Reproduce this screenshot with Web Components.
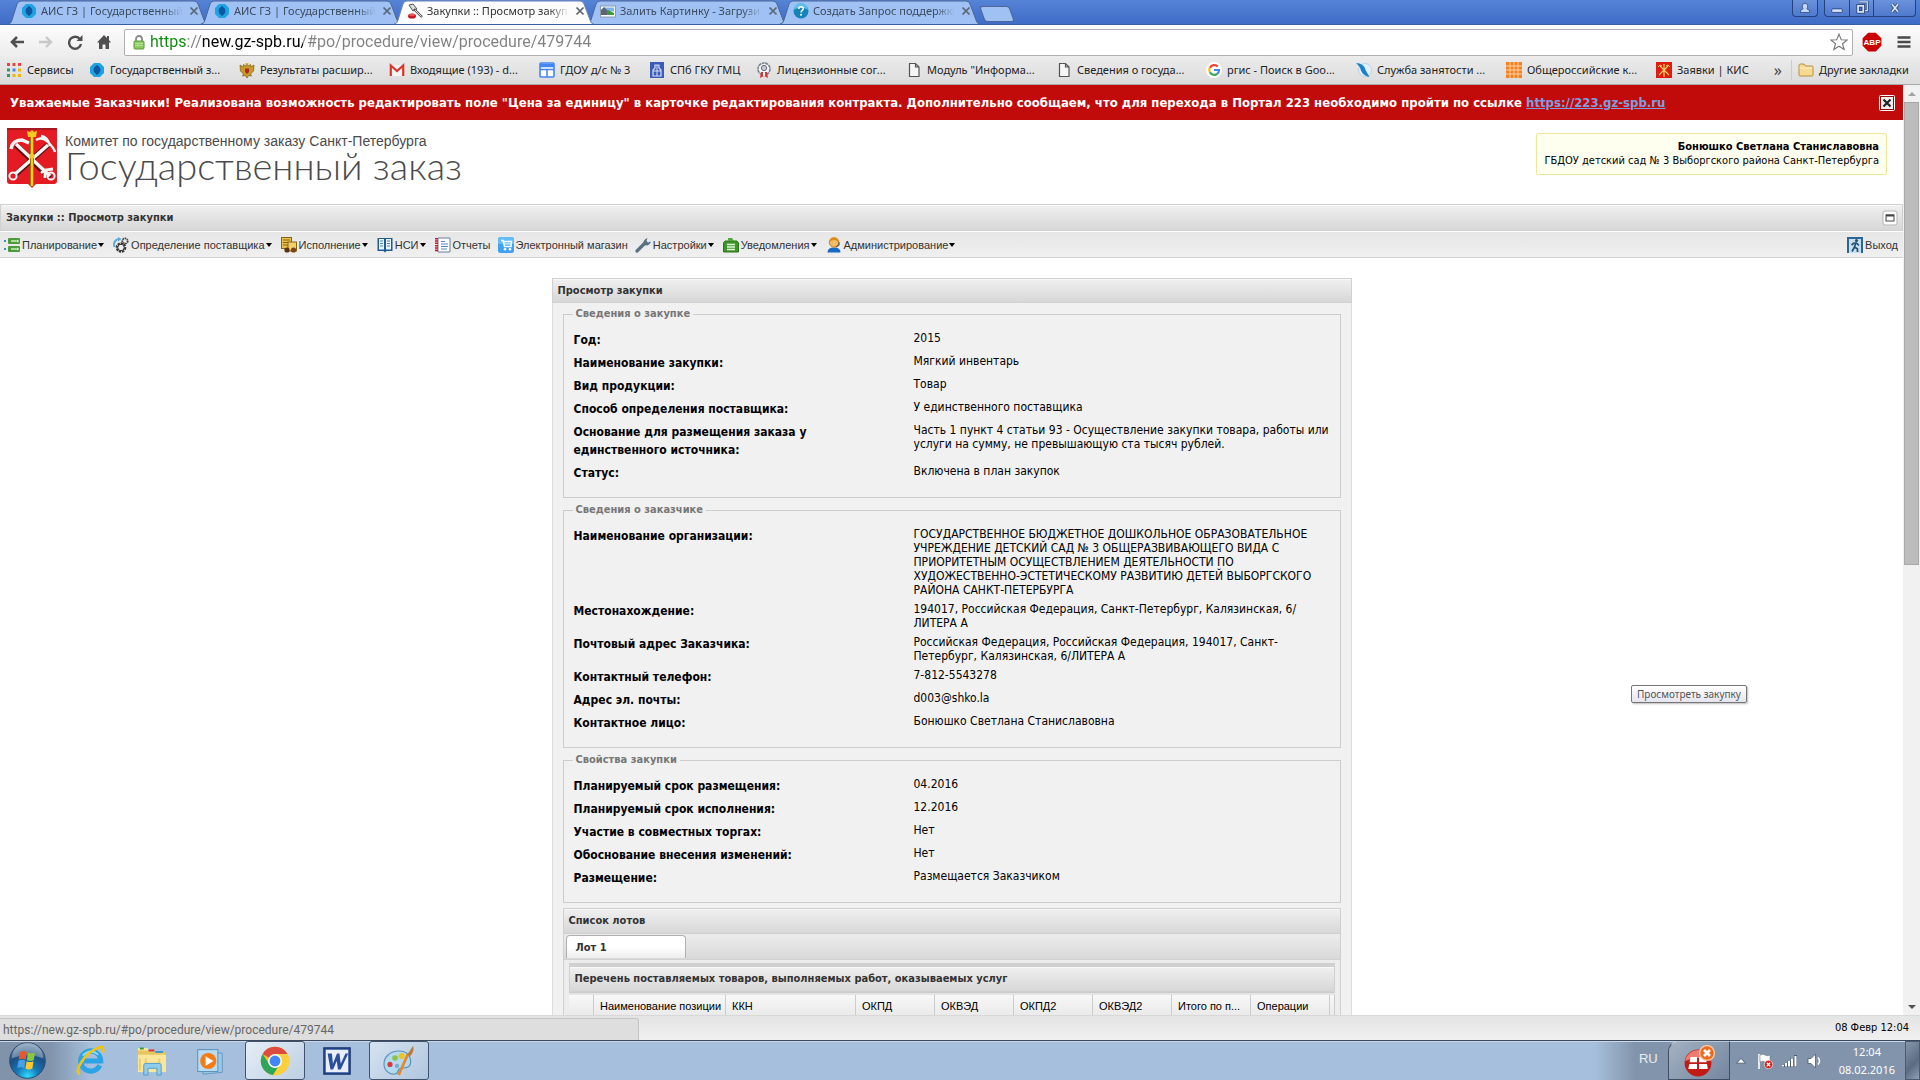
<!DOCTYPE html>
<html lang="ru">
<head>
<meta charset="utf-8">
<title>Закупки :: Просмотр закупки</title>
<style>
html,body{margin:0;height:100%}
body{font-family:"DejaVu Sans Condensed","DejaVu Sans",sans-serif;font-size:12px;color:#000;background:#fff;overflow:hidden}
</style>
</head>
<body>
<desktop-shell></desktop-shell>
<script>
const ICONS = {
drop:`<path d="M5 1h6l4 4v6l-4 4H5l-4-4V5z" fill="#1fa3e0"/><path d="M8 3c2 2 3 3 3 5s-1 3-3 5C6 11 5 10 5 8s1-3 3-5z" fill="#0b4f94"/><circle cx="8" cy="8" r="3.4" fill="#0b57a4"/>`,
gavel:`<path d="M2 2l4-1 4 5-4 2z" fill="#ddd" stroke="#555"/><path d="M7 6l8 8" stroke="#555" stroke-width="2.4"/><path d="M8 7l6.500 6.500" stroke="#ddd" stroke-width="1"/><ellipse cx="5" cy="13" rx="4" ry="2.600" fill="#c8101c"/><ellipse cx="5" cy="12" rx="3" ry="1.300" fill="#f05058"/>`,
photo:`<rect x="0.500" y="3" width="15" height="11" fill="#fff" stroke="#8a9ab0"/><rect x="4" y="4.500" width="10" height="4" fill="#7fb4ea"/><path d="M4 12V9l4-2 6 3v2z" fill="#3a9a3a"/><path d="M1 7l3-3 3 3v5H1z" fill="#5d6570"/>`,
question:`<circle cx="8" cy="8" r="7.500" fill="#1583b8"/><path d="M1 7a7 7 0 0 1 14 0c-4-3-10-3-14 0z" fill="#5cc0ea"/><path d="M5.700 6c0-3 4.600-3 4.600-.4 0 1.700-2.200 1.800-2.200 3.800" fill="none" stroke="#fff" stroke-width="1.500"/><circle cx="8" cy="11.800" r="1" fill="#fff"/>`,
back:`<path d="M15 8H3M8 3L3 8l5 5" fill="none" stroke="#505050" stroke-width="2.600"/>`,
fwd:`<path d="M1 8h12M8 3l5 5-5 5" fill="none" stroke="#c8c8c8" stroke-width="2.400"/>`,
reload:`<path d="M13 5.200A6 6 0 1 0 14 10" fill="none" stroke="#505050" stroke-width="2.400"/><path d="M15.500 1v6h-6z" fill="#505050"/>`,
home:`<path d="M8 1L1 8.500h2V15h3.500v-4.500h3V15H13V8.500h2L13 6V2h-2v2z" fill="#505050"/>`,
lock:`<path d="M5 8V5a3 3 0 0 1 6 0v3" fill="none" stroke="#8a8a8a" stroke-width="1.800"/><rect x="3" y="7" width="10" height="8" rx="1" fill="#8ccb5e" stroke="#5d9a3c"/><path d="M4 9.500h8M4 11.500h8" stroke="#b9e29a"/>`,
star:`<path d="M8 1l2 5 5.300.2-4.200 3.300 1.500 5.200L8 11.700l-4.600 3 1.500-5.200L.700 6.200 6 6z" fill="#fff" stroke="#777" stroke-width="1"/>`,
abp:`<path d="M5 .5h6L15.500 5v6L11 15.500H5L.500 11V5z" fill="#c80000"/><g font-family="Liberation Sans" ><text x="8" y="10.500" font-size="6.500" font-weight="700" fill="#fff" text-anchor="middle">ABP</text></g>`,
burger:`<path d="M1.500 3.500h13M1.500 8h13M1.500 12.500h13" stroke="#4a4a4a" stroke-width="2.600"/>`,
apps:`<g><path d="M1 1h3v3H1zM6.500 1h3v3h-3zM12 1h3v3h-3z" fill="#e8453c"/><path d="M1 6.500h3v3H1z" fill="#1fa25b"/><path d="M6.500 6.500h3v3h-3z" fill="#4285f4"/><path d="M12 6.500h3v3h-3z" fill="#f5b400"/><path d="M1 12h3v3H1z" fill="#1fa25b"/><path d="M6.500 12h3v3h-3zM12 12h3v3h-3z" fill="#f5b400"/></g>`,
eagle:`<path d="M8 2l1.500 2 2-1.500L12 5l3-2-.5 6-3 3 1 2-3-.5L8 16l-1.500-2.500-3 .5 1-2-3-3L1 3l3 2 .5-2.500 2 1.500z" fill="#c79a24" stroke="#7c5b10" stroke-width=".7"/><path d="M6 6.500h4V10l-2 2-2-2z" fill="#b5232a"/><path d="M6.500 1h3v1.500h-3z" fill="#d9b13a"/>`,
gmail:`<path d="M1 3h14v11H1z" fill="#f4f4f4"/><path d="M1.800 14V3.500L8 9l6.200-5.500V14" fill="none" stroke="#d8382c" stroke-width="2.200"/>`,
sites:`<rect x="1" y="1" width="14" height="14" rx="1" fill="#fff" stroke="#4285f4" stroke-width="1.600"/><path d="M1 3.500h14" stroke="#4285f4" stroke-width="3.500"/><path d="M1 7.500h14M8 7.500v7.500" stroke="#4285f4" stroke-width="1.500"/>`,
tower:`<rect x="1" y="0" width="14" height="16" fill="#3a5bb8"/><path d="M4 14V8l2-2V3h4v3l2 2v6z" fill="none" stroke="#d6def5" stroke-width="1.200"/><path d="M8 3v11M4 9h8" stroke="#d6def5"/>`,
medal:`<circle cx="8" cy="7" r="6" fill="#f4f4f4" stroke="#75828c" stroke-width="1.600" stroke-dasharray="3 .6"/><circle cx="8" cy="6" r="2.600" fill="#c8ced4" stroke="#667"/><path d="M5 10h6l1 6-4-2-4 2z" fill="#d8362c"/><path d="M7 10h2v4H7z" fill="#fff"/>`,
page:`<path d="M3.500 1.500h6l3.500 3.500v9.500h-9.500zM9.500 1.500V5H13" fill="#f6f6f6" stroke="#555" stroke-width="1.200"/>`,
google:`<circle cx="8" cy="8" r="8" fill="#fff"/><path d="M11.800 4.600A5 5 0 0 0 3.800 5.700" fill="none" stroke="#ea4335" stroke-width="2.200"/><path d="M3.800 5.700a5 5 0 0 0 0 4.600" fill="none" stroke="#fbbc05" stroke-width="2.200"/><path d="M3.800 10.300a5 5 0 0 0 7.400 1.500" fill="none" stroke="#34a853" stroke-width="2.200"/><path d="M11.200 11.800A5 5 0 0 0 13 8H8" fill="none" stroke="#4285f4" stroke-width="2.200"/>`,
feather:`<circle cx="9" cy="8" r="6.500" fill="#e4eff8" stroke="#b9d3e8"/><path d="M0 1c5 0 9 3 9.500 7l4 7c-5-1-8-4-9-8C4 5 2 3 0 1z" fill="#1b82c8"/>`,
grid:`<rect width="16" height="16" fill="#f58220"/><path d="M0 4h16M0 8h16M0 12h16M4 0v16M8 0v16M12 0v16" stroke="#ffd9b5" stroke-width=".9"/>`,
crest:`<rect width="16" height="16" fill="#dd1c12"/><path d="M3 13L12 4M13 13L4 4M8 2v13" stroke="#f3d25e" stroke-width="1.200"/><path d="M2 5l2-2 2 1M14 5l-2-2-2 1" fill="none" stroke="#f3d25e"/>`,
folder:`<path d="M1 3.500Q1 2 2.500 2H6l1.500 2H14q1 0 1 1v8q0 1-1 1H2q-1 0-1-1z" fill="#f8d992" stroke="#b98f3c"/><path d="M1.500 6h13" stroke="#fdf0cc"/>`,
plan:`<path d="M0 3h2v2H0zM0 11h2v2H0z" fill="#3b8ec9"/><rect x="4" y="1" width="12" height="6" rx="1" fill="#4c9a3c"/><rect x="4" y="9" width="12" height="6" rx="1" fill="#4c9a3c"/><path d="M7 4h5M7 12h5" stroke="#a9dc96" stroke-width="2"/><circle cx="13.500" cy="4" r="1.200" fill="#d9f5cd"/><circle cx="13.500" cy="12" r="1.200" fill="#d9f5cd"/>`,
gears:`<circle cx="12" cy="4" r="2.700" fill="none" stroke="#444" stroke-width="1.800" stroke-dasharray="1.700 .7"/><circle cx="8" cy="10.500" r="4" fill="#fff" stroke="#333" stroke-width="2.600" stroke-dasharray="2.200 .8"/><circle cx="8" cy="10.500" r="3.200" fill="#eee" stroke="#333"/><path d="M1.500 10C0 5 3 2 6 2" fill="none" stroke="#5aa9d6" stroke-width="2"/><path d="M5 0l3.500 2L5 4.500z" fill="#5aa9d6"/>`,
exec:`<rect x="0.500" y="0.500" width="10" height="11" fill="#e8c050" stroke="#8a6414"/><path d="M2 3h7M2 5.500h7M2 8h5" stroke="#8a6414"/><rect x="7" y="5" width="8.500" height="9" fill="#f0d070" stroke="#8a6414"/><circle cx="6" cy="13" r="2.600" fill="#5b3312"/><circle cx="12.500" cy="13" r="2.600" fill="#7a4519"/>`,
book:`<path d="M.5 1h15v13h-6L8 15.500 6.500 14h-6z" fill="#215a92"/><path d="M2 2h5v10.500H2zM9 2h5v10.500H9z" fill="#eaf4fb"/><path d="M3 4h3M3 6.500h3M3 9h3M10 4h3M10 6.500h3M10 9h3" stroke="#4b86b8" stroke-width="1.200"/>`,
report:`<path d="M3 1h12v14H3z" fill="#fff" stroke="#6b7fa8"/><path d="M1.500 1v14" stroke="#d1121a" stroke-width="3" stroke-dasharray="1.500 .8"/><path d="M6 4.500h4M6 7h7M6 9.500h7M6 12h6" stroke="#5b83c9"/>`,
cart:`<rect width="16" height="16" rx="2.500" fill="#3fa2ee"/><path d="M0 3q0-3 3-3h10q3 0 3 3v4H0z" fill="#63bdf8"/><path d="M3 3.500h2l1.500 6H13l.5-5H5.500" fill="none" stroke="#fff" stroke-width="1.500"/><path d="M6 7h7" stroke="#fff"/><circle cx="7" cy="12.300" r="1.300" fill="#fff"/><circle cx="12" cy="12.300" r="1.300" fill="#fff"/>`,
wrench:`<path d="M2 14l7.500-7.500" stroke="#5a7184" stroke-width="3.200" stroke-linecap="round"/><path d="M8.500 6.500q-.5-4 4-5.500l-1 3 1.500 1.500 3-1q-1.500 4.500-5.500 4z" fill="#5a7184"/>`,
note:`<path d="M2 4h12l1.500 2v9H.500V6z" fill="#3f942c" stroke="#2c741c"/><path d="M5 1h4l2 3H5z" fill="#55a83f"/><path d="M4 7.500h8M4 10h8M4 12.500h8" stroke="#e2f6da" stroke-width="1.300"/>`,
admin:`<path d="M1.500 15.500q0-5 6.500-5t6.500 5z" fill="#1769c4"/><circle cx="8" cy="5.500" r="4.600" fill="#f2bd6a" stroke="#c97f14"/><path d="M3 6Q3 0 8 .5 13 0 13 6 11 3 8 3T3 6z" fill="#e08b1a"/><path d="M13 5v3l-3 2" fill="none" stroke="#555" stroke-width="1.200"/>`,
exit:`<rect width="16" height="16" fill="#2a6595"/><rect x="2" y="2" width="12" height="14" fill="#c9dfee"/><circle cx="9.500" cy="3.500" r="1.600" fill="#1f537d"/><path d="M9 5.500L7.500 10l3 2v3M7.500 10L5 14.500M4.500 8L7 6h2.500L12 8.500" fill="none" stroke="#1f537d" stroke-width="1.700"/>`,
restore:`<rect x="1" y="1" width="14" height="14" rx="2" fill="#fff" stroke="#b5b5b5"/><rect x="4" y="5" width="8" height="6" fill="none" stroke="#444"/><path d="M4 5.500h8" stroke="#444" stroke-width="2"/>`,
closebox:`<rect x=".5" y=".5" width="15" height="15" rx="1" fill="#8d0d0d" stroke="#fff"/><rect x="2" y="2" width="12" height="12" fill="#eee"/><path d="M4.500 4.500l7 7M11.500 4.500l-7 7" stroke="#222" stroke-width="2.200"/>`,
user:`<path d="M2 14v-3q3-1 3.500-2Q4 7 4.500 4.500q1-3 3.500-3t3.500 3Q12 7 10.500 9q.5 1 3.500 2v3z" fill="#c6d7f3" stroke="#26427c"/>`,
min:`<rect x="2" y="9" width="12" height="4" rx="1" fill="#dbe6f8" stroke="#26427c"/>`,
max:`<path d="M5 1h9v10h-3" fill="none" stroke="#26427c" stroke-width="3"/><path d="M5 1h9v10h-3" fill="none" stroke="#dbe6f8" stroke-width="1.400"/><rect x="2" y="4" width="9" height="10" fill="#dbe6f8" stroke="#26427c"/><rect x="5" y="7" width="3" height="4" fill="#4a70bd" stroke="#26427c"/>`,
close:`<path d="M4 3l8 10M12 3L4 13" stroke="#26427c" stroke-width="4.400"/><path d="M4 3l8 10M12 3L4 13" stroke="#dbe6f8" stroke-width="2.400"/>`,
orb:`<defs><radialGradient id="o" cx=".5" cy=".95" r=".9"><stop offset="0" stop-color="#2fe0ff"/><stop offset=".35" stop-color="#1577b8"/><stop offset=".7" stop-color="#1d4f80"/><stop offset="1" stop-color="#6d8cab"/></radialGradient></defs><circle cx="8" cy="8" r="7.700" fill="url(#o)" stroke="#27466b" stroke-width=".4"/><path d="M1.300 7A6.700 6.700 0 0 1 14.700 7Q8 4.500 1.300 7z" fill="#fff" opacity=".3"/><path d="M4.800 4.300q1.500-.9 2.900 0l-.5 3.300q-1.500-.8-3 0z" fill="#e8582a"/><path d="M8.200 4.500q1.500.8 3.100 0l-.6 3.300q-1.500.8-3 0z" fill="#8cc63e"/><path d="M4.100 8.100q1.500-.9 3 0l-.5 3.200q-1.500-.8-3 0z" fill="#4aa0e6"/><path d="M7.600 8.300q1.500.8 3 0l-.5 3.200q-1.500.8-3 0z" fill="#fdc82f"/>`,
ie:`<path d="M12.800 10.500A5.200 5.200 0 1 1 13.300 8.300H4.500" fill="none" stroke="#2ba3e6" stroke-width="2.600"/><path d="M4 5.500Q8 1.500 12 5" fill="none" stroke="#8fdcfa" stroke-width=".9"/><path d="M2.500 15Q0 14 3.500 8.500T13 1q2-.3 1.500 3" fill="none" stroke="#f2c40f" stroke-width="1.300"/>`,
explorer:`<path d="M1 2.500h5l1 1h8v10H1z" fill="#e9c65c"/><path d="M1 1.500h5l.7 1.300H1z" fill="#f7e7a6"/><path d="M2 1.800h2" stroke="#2a9a3a"/><path d="M6.500 2.800h3" stroke="#d33"/><path d="M10 3.600h4" stroke="#39c"/><path d="M1 5h14.500v9H1z" fill="#f9e59c"/><path d="M2 7v6M5 7v6M12 7v6" stroke="#edcc69"/><path d="M4 15.500v-5q0-1 1-1h7q1 0 1 1v5h-2.200V12H6.200v3.500z" fill="#8fcdec" stroke="#4f9cc9" stroke-width=".5"/>`,
wmp:`<path d="M4 2.500l11 1v11L4 15.500z" fill="#9cc8e8" stroke="#5c94bd" stroke-width=".5"/><rect x="1" y="1.500" width="11.500" height="12.500" fill="#b9dcf2" stroke="#5c94bd" stroke-width=".6"/><circle cx="7" cy="8" r="4.600" fill="#f47b15"/><path d="M5.500 5.300v5.400L10 8z" fill="#fff"/>`,
chrome:`<circle cx="8" cy="8" r="7.600" fill="#f4c020"/><path d="M8 8L1.400 4.200A7.600 7.600 0 0 1 14.600 4.200H8z" fill="#dd4b3e"/><path d="M1.400 4.200A7.600 7.600 0 0 0 7 15.500L10.500 9.500 8 8 4.700 9.500z" fill="#2da55a"/><path d="M14.600 4.200H8V8l2.800 2L7 15.500A7.600 7.600 0 0 0 14.600 4.200z" fill="#fccf3c"/><circle cx="8" cy="8" r="3.700" fill="#fff"/><circle cx="8" cy="8" r="2.900" fill="#4285f4"/>`,
word:`<rect x="1" y="1" width="14" height="14" fill="#2b4f9c" stroke="#1c3670" stroke-width=".7"/><rect x="2" y="2" width="12" height="12" fill="#e9effa"/><path d="M3 4h2.300l.5 5.500L8 4h1.300l.7 5.500L12.500 4H14l-4 8.500H8.500L7.900 8l-2 4.500H4.500z" fill="#2b4f9c"/>`,
paint:`<path d="M8 3C3 3 .5 6.500.5 9.500S3 15 6 14.500c2-.4 1-2 2.500-2.700s5 .5 5.300-3C14 5 11.500 3 8 3z" fill="#b5daf0" stroke="#5a93b8" stroke-width=".6"/><circle cx="3.500" cy="9.700" r="1.300" fill="#d93b3b"/><circle cx="6" cy="6.500" r="1.400" fill="#8bc34a"/><circle cx="9.300" cy="5.500" r="1.500" fill="#f0c419"/><circle cx="7" cy="10.500" r="1.100" fill="#7aaed0"/><path d="M7.800 15L12.500 4.500" stroke="#e58a2a" stroke-width="1.400"/><path d="M12 5L15 .5q1 2-1.300 5z" fill="#b77b3f"/>`,
ball:`<circle cx="7.500" cy="9" r="6.700" fill="#c21a14"/><path d="M1 8a6.600 6.600 0 0 1 13 0q-6-3-13 0z" fill="#ef7a70"/><path d="M3.800 6h3.200v2.600H3.300zM8 6h3.200l.6 2.600H8zM3.100 9.500H7V12H2.700zM8 9.500h4l.4 2.500H8z" fill="#fff"/><circle cx="12" cy="4" r="3.700" fill="#ee6a1e" stroke="#f9c9a5" stroke-width=".7"/><path d="M10.500 2.500l3 3M13.500 2.500l-3 3" stroke="#fff" stroke-width="1.300"/>`,
up:`<path d="M3 10.500L8 5l5 5.500z" fill="#fff" stroke="#4c5b6e"/>`,
flag:`<path d="M2 1v15" stroke="#fff" stroke-width="1.600"/><path d="M3 2q3-1.500 5 0t5 0v7q-3 1.500-5 0t-5 0z" fill="#fff" stroke="#5c6a7a" stroke-width=".5"/><circle cx="11.500" cy="11.500" r="4.200" fill="#d0201c" stroke="#fff" stroke-width=".6"/><path d="M9.800 9.800l3.400 3.400M13.200 9.800l-3.400 3.400" stroke="#fff" stroke-width="1.300"/>`,
signal:`<path d="M1 14v-2M4 14v-4M7 14V8M10 14V5M13.500 14V2" stroke="#4c5b6e" stroke-width="3"/><path d="M1 13.500V12M4 13.500V10M7 13.500V8M10 13.500V5.500M13.500 13.500V3" stroke="#fff" stroke-width="2"/>`,
speaker:`<path d="M1 5.500h3L8.500 1v14L4 10.500H1z" fill="#fff" stroke="#4c5b6e" stroke-width=".8"/><path d="M11 4.500q3 3.500 0 7" fill="none" stroke="#fff" stroke-width="1.500"/>`,
x:`<path d="M4 4l8 8M12 4l-8 8" stroke="#5a6577" stroke-width="2"/>`
};

class Base extends HTMLElement {
  constructor(){ super(); this.attachShadow({mode:'open'}); }
  connectedCallback(){ this.shadowRoot.innerHTML = this.render(); }
  at(n, d=''){ return this.getAttribute(n) ?? d; }
}
const RESET = `:host,*{box-sizing:border-box}button{font:inherit;color:inherit;background:none;border:0;padding:0;margin:0;text-align:left;cursor:pointer}a{color:inherit;text-decoration:none}`;
const define = (name, render) => customElements.define(name, class extends Base { render(){ return render(this); } });

define('ui-icon', e => `<style>:host{display:block;flex:none;width:${e.at('size','16')}px;height:${e.at('size','16')}px}svg{display:block;width:100%;height:100%}</style><svg viewBox="0 0 16 16" aria-hidden="true">${ICONS[e.at('name')]}</svg>`);

/* ---------- browser chrome ---------- */
define('browser-tab', e => { const on = e.hasAttribute('active'); return `<style>${RESET}
:host{display:grid;grid-template-columns:100%;flex:none;width:200px;height:24px;margin-right:-7px;position:relative;z-index:${on?2:1};color:${on?'#333':'#3c4a5e'}}
svg,.row{grid-area:1/1}svg{width:100%;height:100%}
.row{display:flex;align-items:center;gap:4px;padding:0 7px 2px 13px;position:relative}
.t{flex:1;min-width:0;overflow:hidden;white-space:nowrap;line-height:16px;mask-image:linear-gradient(90deg,#000 86%,transparent)}
button{display:block}
</style><svg viewBox="0 0 200 24" preserveAspectRatio="none"><path d="M0 24Q3 24 4 20L9 4Q10 1 13 1H186Q189 1 190 4L196 20Q197 24 200 24" fill="${on?'#fcfcfc':'#a0c1f3'}" stroke="${on?'#6f86b5':'#4c6696'}"/></svg>
<div class="row"><ui-icon name="${e.at('icon')}"></ui-icon><span class="t"><slot></slot></span><button aria-label="Закрыть вкладку"><ui-icon name="x" size="14"></ui-icon></button></div>`; });

define('window-buttons', () => `<style>${RESET}
:host{display:flex;gap:6px;margin:0 4px 0 auto;align-self:flex-start}
div{display:flex;border:1px solid #26427c;border-top:0;border-radius:0 0 4px 4px;background:linear-gradient(#6b92dc,#4f79cc)}
button{display:flex;justify-content:center;width:24px;height:16px;align-items:center}
button+button{border-left:1px solid #26427c}.c{width:42px}
</style><div><button aria-label="Пользователь"><ui-icon name="user" size="12"></ui-icon></button></div>
<div><button aria-label="Свернуть"><ui-icon name="min" size="14"></ui-icon></button><button aria-label="Развернуть"><ui-icon name="max" size="14"></ui-icon></button><button class="c" aria-label="Закрыть"><ui-icon name="close" size="12"></ui-icon></button></div>`);

define('tab-strip', () => `<style>:host{display:flex;height:24px;padding-left:8px;background:linear-gradient(#5583d6,#3f6cc6);border-bottom:1px solid #3a5ca0;font:11px/16px "Noto Sans",sans-serif}
.new{flex:none;width:30px;height:16px;margin:6px 0 0 9px;padding:0;background:#a0c1f3;border:1px solid #4c6696;border-radius:3px;transform:skewX(20deg)}</style>
<browser-tab icon="drop">АИС ГЗ | Государственный заказ</browser-tab><browser-tab icon="drop">АИС ГЗ | Государственный заказ</browser-tab><browser-tab icon="gavel" active>Закупки :: Просмотр закупки</browser-tab><browser-tab icon="photo">Залить Картинку - Загрузить</browser-tab><browser-tab icon="question">Создать Запрос поддержки</browser-tab>
<button class="new" aria-label="Новая вкладка"></button><window-buttons></window-buttons>`);

define('address-bar', () => `<style>${RESET}
:host{display:flex;align-items:center;height:32px;padding:2px 8px 0 9px;gap:13px;background:linear-gradient(#fcfcfc,#ececec)}
.box{flex:1;display:flex;align-items:center;height:27px;margin:0 -4px 0 -1px;padding:0 4px 0 6px;gap:3px;border:1px solid #b0b0b0;border-radius:2px;background:#fff}
input{flex:1;min-width:0;border:0;outline:0;padding:0;height:24px;font:16px/24px Roboto,sans-serif;color:transparent;background:linear-gradient(90deg,#0b8a0b 36px,#808080 36px 51px,#000 51px 153px,#808080 153px);-webkit-background-clip:text;background-clip:text}
.menu{margin-left:1px}
</style>
<button aria-label="Назад"><ui-icon name="back"></ui-icon></button><button aria-label="Вперёд"><ui-icon name="fwd"></ui-icon></button><button aria-label="Обновить"><ui-icon name="reload"></ui-icon></button><button aria-label="Домой"><ui-icon name="home"></ui-icon></button>
<div class="box"><ui-icon name="lock"></ui-icon><input aria-label="Адрес" value="https://new.gz-spb.ru/#po/procedure/view/procedure/479744"><button aria-label="В закладки"><ui-icon name="star" size="18"></ui-icon></button></div>
<button aria-label="Adblock Plus"><ui-icon name="abp" size="20"></ui-icon></button><button class="menu" aria-label="Меню"><ui-icon name="burger"></ui-icon></button>`);

define('book-mark', e => `<style>${RESET}:host{display:block;flex:none;width:${e.at('w','150')}px}a{display:flex;align-items:center;gap:5px;white-space:nowrap}</style><a href="#"><ui-icon name="${e.at('icon')}"></ui-icon><span><slot></slot></span></a>`);

define('bookmarks-bar', () => `<style>:host{display:flex;align-items:center;box-sizing:border-box;height:28px;padding:0 8px 1px 6px;background:linear-gradient(#ebebeb,#dcdcdc);border-bottom:1px solid #a9a9a9;font:11px/16px "Noto Sans",sans-serif;color:#222}
button{font:16px/16px "Noto Sans";background:none;border:0;padding:0;margin-left:auto;color:#444}.sep{width:1px;height:20px;background:#c4ccd4;margin:0 6px 0 9px}</style>
<book-mark icon="apps" w="83">Сервисы</book-mark><book-mark icon="drop">Государственный з...</book-mark><book-mark icon="eagle">Результаты расшир...</book-mark><book-mark icon="gmail">Входящие (193) - d...</book-mark><book-mark icon="sites" w="110">ГДОУ д/с № 3</book-mark><book-mark icon="tower" w="107">СПб ГКУ ГМЦ</book-mark><book-mark icon="medal">Лицензионные сог...</book-mark><book-mark icon="page">Модуль "Информа...</book-mark><book-mark icon="page">Сведения о госуда...</book-mark><book-mark icon="google">ргис - Поиск в Goo...</book-mark><book-mark icon="feather">Служба занятости ...</book-mark><book-mark icon="grid">Общероссийские к...</book-mark><book-mark icon="crest" w="93">Заявки | КИС</book-mark>
<button aria-label="Ещё закладки">»</button><span class="sep"></span><book-mark icon="folder" w="114">Другие закладки</book-mark>`);

/* ---------- site ---------- */
define('alert-banner', () => `<style>${RESET}:host{display:flex;align-items:center;height:35px;padding:0 8px 0 10px;background:#c10a0a;color:#fff;font-weight:700;font-size:13px;line-height:16px;white-space:nowrap}
p{flex:1;margin:0}a{color:#7f9fdc;text-decoration:underline}</style>
<p>Уважаемые Заказчики! Реализована возможность редактировать поле "Цена за единицу" в карточке редактирования контракта. Дополнительно сообщаем, что для перехода в Портал 223 необходимо пройти по ссылке <a href="https://223.gz-spb.ru">https://223.gz-spb.ru</a></p><button aria-label="Закрыть"><ui-icon name="closebox"></ui-icon></button>`);

define('site-header', () => `<style>${RESET}:host{display:flex;justify-content:space-between;height:84px;padding:8px 16px 0 7px}
.brand{display:flex;gap:8px;color:#4a4a4a}.brand svg{width:50px;height:60px}
.s{font:14px/16px "Liberation Sans",sans-serif;margin-top:5px}.b{font:300 38px/32px Lato,sans-serif;white-space:nowrap}
.user{height:42px;margin-top:5px;padding:6px 7px;border:1px solid #f0e69a;border-radius:2px;background:#fffff0;text-align:right;font-size:11px;line-height:14px;white-space:nowrap}
b{display:block}</style>
<div class="brand"><svg viewBox="0 0 50 60"><path d="M0 0h50v53q0 3-3 3H29l-4 4-4-4H3q-3 0-3-3z" fill="#e41b23"/><path d="M0 0h50v2H0z" fill="#a51a20"/><g fill="none" stroke="#5c1012" stroke-width="5.500"><path d="M9 17L43 50M41 17L8 47"/></g><g fill="none" stroke="#f4f4f4" stroke-width="3.400"><path d="M9 16L43 48M41 17L8 46"/><path d="M4 21Q5 12 15 12l7 3" /><path d="M29 12q6-4 12 2t7 10M34 8q7 1 9 10" stroke-width="2.400"/><path d="M34 45l4-3 8-1M38 42v8" stroke-width="2.800"/><circle cx="6" cy="48" r="3.600" stroke-width="2"/><circle cx="44" cy="48" r="3.600" stroke-width="2"/></g><path d="M25 5v53" stroke="#7a5b00" stroke-width="4"/><path d="M25 4v54" stroke="#f2c821" stroke-width="2.600"/><path d="M20 3l3 1 2-2 2 2 3-1-1 6h-8z" fill="#f2c821"/><circle cx="25" cy="28" r="2.600" fill="#f2c821"/></svg>
<div><div class="s">Комитет по государственному заказу Санкт-Петербурга</div><div class="b">Государственный заказ</div></div></div>
<div class="user"><b>Бонюшко Светлана Станиславовна</b>ГБДОУ детский сад № 3 Выборгского района Санкт-Петербурга</div>`);

define('title-bar', e => `<style>:host{display:flex;align-items:center;justify-content:space-between;height:${e.at('h','26')}px;padding:0 4px 0 5px;border:1px solid #d0d0d0;box-shadow:inset 0 1px #f8f8f8;background:linear-gradient(#f0f0f0,#d7d7d7);font-weight:700;font-size:11px;line-height:16px;color:#333;box-sizing:border-box}h2{margin:0;font:inherit}</style><h2><slot></slot></h2><slot name="tool"></slot>`);

define('menu-item', e => `<style>${RESET}:host{display:block}button{display:flex;align-items:center;gap:2px;white-space:nowrap}i{width:0;height:0;margin:0 2px 0 -1px;border:3px solid transparent;border-top:4px solid #000;border-bottom:0}</style><button><ui-icon name="${e.at('icon')}"></ui-icon><slot></slot>${e.hasAttribute('drop')?'<i></i>':''}</button>`);

define('main-menu', () => `<style>:host{display:flex;align-items:center;gap:7px;height:27px;padding:0 5px 0 4px;border-bottom:1px solid #d0d0d0;border-top:1px solid #fff;background:linear-gradient(#e6e6e6,#f0f0f0);font:11px/14px "Liberation Sans",sans-serif;color:#333;box-sizing:border-box}.out{margin-left:auto}</style>
<menu-item icon="plan" drop>Планирование</menu-item><menu-item icon="gears" drop>Определение поставщика</menu-item><menu-item icon="exec" drop>Исполнение</menu-item><menu-item icon="book" drop>НСИ</menu-item><menu-item icon="report">Отчеты</menu-item><menu-item icon="cart">Электронный магазин</menu-item><menu-item icon="wrench" drop>Настройки</menu-item><menu-item icon="note" drop>Уведомления</menu-item><menu-item icon="admin" drop>Администрирование</menu-item><menu-item class="out" icon="exit">Выход</menu-item>`);

define('field-group', e => `<style>fieldset{margin:0;padding:10px;border:1px solid #ccc;min-width:0}:host{display:block}
legend{margin-left:-1px;padding:0 3px;font-weight:700;font-size:11px;line-height:14px;color:#777}
dl{margin:0}</style><fieldset><legend>${e.at('label')}</legend><dl><slot></slot></dl></fieldset>`);

define('field-row', e => `<style>:host{display:grid;grid-template-columns:340px 1fr;padding-bottom:5px}
dt,dd{margin:0}dt{font-weight:700;line-height:18px;white-space:pre-line}dd{line-height:14px;white-space:pre-line}</style><dt>${e.at('label')}</dt><dd><slot></slot></dd>`);

define('lot-table', () => `<style>:host{display:block;padding:3px 5px 0;background:#ececec}
.wrap{border-top:3px solid #d0d0d0}
table{width:100%;border-collapse:collapse;table-layout:fixed;background:linear-gradient(#f8f8f8,#e8e8e8);font:11px/12px "Liberation Sans",sans-serif}
th{font-weight:400;text-align:left;padding:5px 0 6px 6px;border-right:1px solid #ccc;white-space:nowrap}
.gap{height:2px;background:#e4e4e4;border-top:1px solid #ccc}</style>
<div class="wrap"><title-bar h="26">Перечень поставляемых товаров, выполняемых работ, оказываемых услуг</title-bar><div class="gap"></div>
<table><colgroup><col style="width:25px"><col style="width:132px"><col style="width:130px"><col style="width:79px"><col style="width:79px"><col style="width:79px"><col style="width:79px"><col style="width:79px"><col style="width:79px"><col></colgroup>
<thead><tr><th></th><th>Наименование позиции</th><th>ККН</th><th>ОКПД</th><th>ОКВЭД</th><th>ОКПД2</th><th>ОКВЭД2</th><th>Итого по п...</th><th>Операции</th><th></th></tr></thead></table></div>`);

define('lot-panel', () => `<style>${RESET}:host{display:block}
.tabs{height:26px;padding:1px 2px 2px;border:1px solid #d0d0d0;border-top:0;background:linear-gradient(#ececec,#d9d9d9)}
button{display:block;width:120px;height:23px;padding-left:9px;border:1px solid #b0b0b0;border-bottom:0;border-radius:4px 4px 0 0;background:linear-gradient(#fff 50%,#ececec);font-weight:700;font-size:11px;color:#333}
.body{border:1px solid #d0d0d0;border-top:0}</style>
<title-bar h="26">Список лотов</title-bar><div class="tabs"><button>Лот 1</button></div><div class="body"><lot-table></lot-table></div>`);

define('view-panel', () => `<style>:host{display:block;width:800px;margin:20px auto 0;border:1px solid #ddd;border-top:0;border-radius:3px 3px 0 0;background:#f1f1f1;box-sizing:border-box}
title-bar{margin:0 -1px}
.body{display:flex;flex-direction:column;gap:5px;padding:4px 10px 20px}</style>
<title-bar h="25">Просмотр закупки</title-bar>
<div class="body">
<field-group label="Сведения о закупке"><field-row label="Год:">2015</field-row><field-row label="Наименование закупки:">Мягкий инвентарь</field-row><field-row label="Вид продукции:">Товар</field-row><field-row label="Способ определения поставщика:">У единственного поставщика</field-row><field-row label="Основание для размещения заказа у&#10;единственного источника:">Часть 1 пункт 4 статьи 93 - Осуществление закупки товара, работы или
услуги на сумму, не превышающую ста тысяч рублей.</field-row><field-row label="Статус:">Включена в план закупок</field-row></field-group>
<field-group label="Сведения о заказчике"><field-row label="Наименование организации:">ГОСУДАРСТВЕННОЕ БЮДЖЕТНОЕ ДОШКОЛЬНОЕ ОБРАЗОВАТЕЛЬНОЕ
УЧРЕЖДЕНИЕ ДЕТСКИЙ САД № 3 ОБЩЕРАЗВИВАЮЩЕГО ВИДА С
ПРИОРИТЕТНЫМ ОСУЩЕСТВЛЕНИЕМ ДЕЯТЕЛЬНОСТИ ПО
ХУДОЖЕСТВЕННО-ЭСТЕТИЧЕСКОМУ РАЗВИТИЮ ДЕТЕЙ ВЫБОРГСКОГО
РАЙОНА САНКТ-ПЕТЕРБУРГА</field-row><field-row label="Местонахождение:">194017, Российская Федерация, Санкт-Петербург, Калязинская, 6/
ЛИТЕРА А</field-row><field-row label="Почтовый адрес Заказчика:">Российская Федерация, Российская Федерация, 194017, Санкт-
Петербург, Калязинская, 6/ЛИТЕРА А</field-row><field-row label="Контактный телефон:">7-812-5543278</field-row><field-row label="Адрес эл. почты:">d003@shko.la</field-row><field-row label="Контактное лицо:">Бонюшко Светлана Станиславовна</field-row></field-group>
<field-group label="Свойства закупки"><field-row label="Планируемый срок размещения:">04.2016</field-row><field-row label="Планируемый срок исполнения:">12.2016</field-row><field-row label="Участие в совместных торгах:">Нет</field-row><field-row label="Обоснование внесения изменений:">Нет</field-row><field-row label="Размещение:">Размещается Заказчиком</field-row></field-group>
<lot-panel></lot-panel></div>`);

define('scroll-bar', () => `<style>:host{display:flex;flex-direction:column;align-items:center;width:17px;flex:none;background:#f1f1f1}
.a{height:17px;display:flex;align-items:center}.t{width:15px;flex:0 0 463px;background:#bcbcbc;border:1px solid #a8a8a8;box-sizing:border-box}.r{flex:1}
i{border:4px solid transparent}.u{border-bottom-color:#a3a3a3;border-top:0}.d{border-top-color:#505050;border-bottom:0}</style><div class="a"><i class="u"></i></div><div class="t"></div><div class="r"></div><div class="a"><i class="d"></i></div>`);

define('page-view', () => `<style>:host{display:flex;flex-direction:column;flex:1;min-height:0;position:relative}
.scroll{flex:1;display:flex;min-height:0}main{flex:1;min-width:0;overflow:hidden}
footer{flex:none;height:25px;padding:0 11px;border-top:1px solid #d8d8d8;background:linear-gradient(#e4e4e4,#f0f0f0);font-size:11px;line-height:24px;text-align:right;box-sizing:border-box}
.status{position:absolute;left:0;bottom:0;width:639px;height:22px;padding-left:3px;box-sizing:border-box;border:1px solid #c4c4c4;border-left:0;border-bottom:0;border-radius:0 3px 0 0;background:#dedede;font:12px/22px Roboto,sans-serif;color:#666}
.tip{position:absolute;left:1631px;top:600px;padding:0 5px;border:1px solid #767676;border-radius:2px;background:linear-gradient(#fff,#e5e5f0);box-shadow:1px 1px 2px #0004;font:10px/16px "Noto Sans",sans-serif;color:#555}</style>
<div class="scroll"><main><alert-banner></alert-banner><site-header></site-header><title-bar h="27">Закупки :: Просмотр закупки<ui-icon slot="tool" name="restore"></ui-icon></title-bar><main-menu></main-menu><view-panel></view-panel></main><scroll-bar></scroll-bar></div>
<footer>08 Февр 12:04</footer><div class="status">https://new.gz-spb.ru/#po/procedure/view/procedure/479744</div><div class="tip" role="tooltip">Просмотреть закупку</div>`);

/* ---------- taskbar ---------- */
define('task-bar', () => `<style>${RESET}:host{display:flex;flex:none;height:40px;border-top:1px solid #3c495c;box-shadow:inset 0 1px #c9d8ea;background:linear-gradient(90deg,#8093ab 50px,#a6bfdc 90px,#a6bfdc calc(100% - 325px),#8294ab calc(100% - 285px));font:11px/18px "Noto Sans",sans-serif;color:#fff;box-sizing:border-box}
button{display:flex;align-items:center;justify-content:center;width:62px}
.orb{width:54px}.on{width:60px;margin:0 1px;border:1px solid #42546d;border-radius:3px;background:linear-gradient(135deg,#e6eef7,#bccfe4)}.on.dim{background:linear-gradient(135deg,#d6e2f0,#b0c6df)}
.tray{margin-left:auto;display:flex;align-items:center}
.lang{font:13px/16px "Liberation Sans",sans-serif;color:#e8edf4;margin:0 10px 4px 0}
.k{width:62px;height:39px;border:1px solid #3f4e62;border-top-color:#bcc8d6;border-radius:10px 0 0 0;background:linear-gradient(135deg,#a3b1c2,#7487a0)}
.ic{display:flex;align-items:center;gap:9px;padding:0 16px 0 4px}.clock{text-align:center;margin-right:10px}
.desk{width:15px;height:39px;border:1px solid #4b5b70;background:linear-gradient(135deg,#8696aa,#5b6c82 60%,#8fa0b6)}</style>
<button class="orb" aria-label="Пуск"><ui-icon name="orb" size="37"></ui-icon></button><button style="width:72px" aria-label="Internet Explorer"><ui-icon name="ie" size="31"></ui-icon></button><button style="width:50px" aria-label="Проводник"><ui-icon name="explorer" size="31"></ui-icon></button><button style="width:68px" aria-label="Проигрыватель"><ui-icon name="wmp" size="28"></ui-icon></button><button class="on" aria-label="Google Chrome"><ui-icon name="chrome" size="30"></ui-icon></button><button aria-label="Word"><ui-icon name="word" size="30"></ui-icon></button><button class="on dim" aria-label="Paint"><ui-icon name="paint" size="32"></ui-icon></button>
<div class="tray"><span class="lang">RU</span><button class="k" aria-label="Состояние"><ui-icon name="ball" size="32"></ui-icon></button><div class="ic"><ui-icon name="up" size="14"></ui-icon><ui-icon name="flag"></ui-icon><ui-icon name="signal"></ui-icon><ui-icon name="speaker"></ui-icon></div><div class="clock">12:04<br>08.02.2016</div><button class="desk" aria-label="Показать рабочий стол"></button></div>`);

define('desktop-shell', () => `<style>:host{display:flex;flex-direction:column;height:100vh}</style><tab-strip></tab-strip><address-bar></address-bar><bookmarks-bar></bookmarks-bar><page-view></page-view><task-bar></task-bar>`);
</script>
</body>
</html>
